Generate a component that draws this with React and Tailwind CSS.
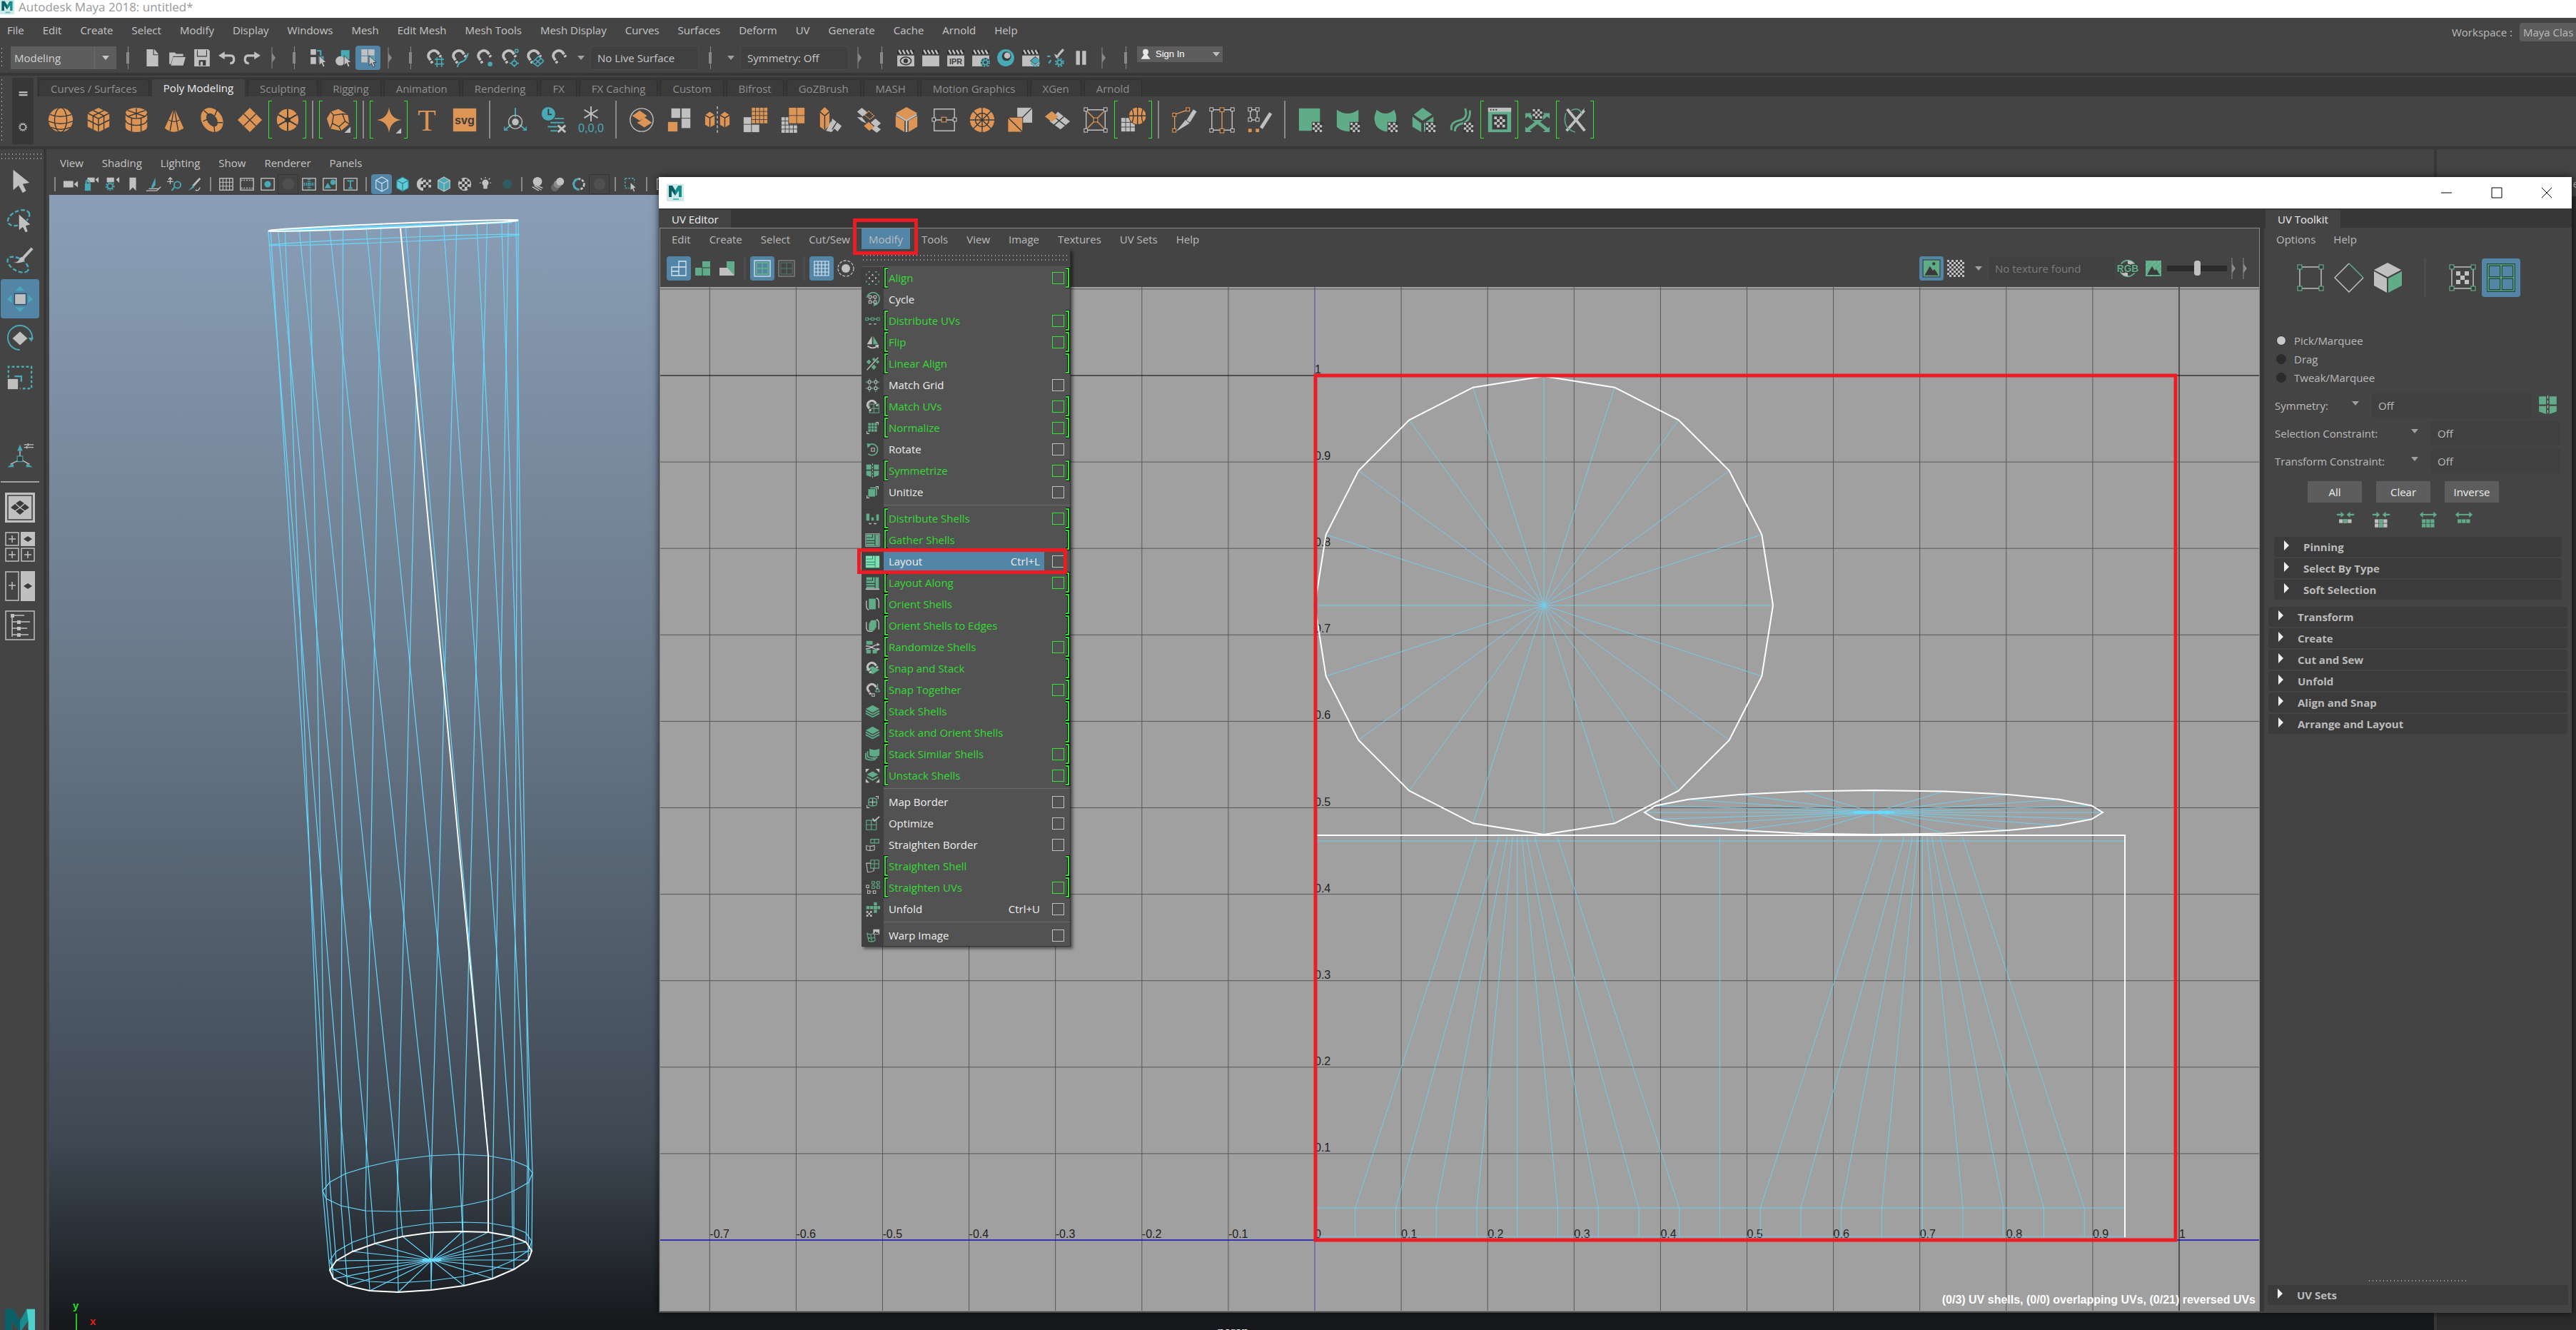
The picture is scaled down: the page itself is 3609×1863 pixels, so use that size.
import { useState } from 'react'
import clsx from 'clsx'

const L = '#c0c0c0'
const T = '#49a9b5'
const O = '#dc9555'
const G = '#60ab88'
const D = '#3a3a3a'
const CYAN = '#66d9ff'

// ---------------------------------------------------------------- icon parts

function Checker({ x, y, s, n = 4, color = L }) {
  const cells = []
  for (let r = 0; r < n; r++) {
    for (let c = 0; c < n; c++) {
      if ((r + c) % 2 === 0) cells.push(<rect key={`${r}-${c}`} x={x + c * s} y={y + r * s} width={s} height={s} fill={color} />)
    }
  }
  return <g>{cells}</g>
}

function Tiles({ x, y, s, cols, rows, gap = 1, color = L }) {
  const cells = []
  for (let r = 0; r < rows; r++) {
    for (let c = 0; c < cols; c++) {
      cells.push(<rect key={`${r}-${c}`} x={x + c * (s + gap)} y={y + r * (s + gap)} width={s} height={s} fill={color} />)
    }
  }
  return <g>{cells}</g>
}

const line = (d, color = L, w = 1.5, extra = {}) => <path d={d} fill="none" stroke={color} strokeWidth={w} {...extra} />
const fill = (d, color = L) => <path d={d} fill={color} />
const box = (x, y, s, color = L) => <rect x={x} y={y} width={s} height={s} fill={D} stroke={color} strokeWidth="1.2" />

const cursor = (x, y) => <path d={`M${x} ${y}l0 13l3 -3l2 5l2.4 -1l-2 -5h4z`} fill={L} stroke={D} strokeWidth="0.8" />
const gear = (x, y, r, color = T) => (
  <g fill="none" stroke={color}>
    <circle cx={x} cy={y} r={r} strokeWidth="2" />
    <circle cx={x} cy={y} r={r + 2} strokeWidth="2" strokeDasharray="2 2" />
  </g>
)
const magnet = (
  <g fill="none">
    <path d="M9 19L4 11A7 7 0 0 1 16 5L20 11" stroke={L} strokeWidth="3.5" />
    <path d="M5 17L10 14M15 10L20 7" stroke={D} strokeWidth="1.2" />
  </g>
)
const clapper = (
  <g>
    {fill('M1 9H23V23H1z')}
    {fill('M1 2H23V7H1z', '#2b2b2b')}
    {line('M3 2l3 5M8 2l3 5M13 2l3 5M18 2l3 5', L, 2.4)}
  </g>
)

function Icon({ size = 24, box: vb = 24, className, children }) {
  return (
    <svg width={size} height={size} viewBox={`0 0 ${vb} ${vb}`} className={clsx('shrink-0', className)} aria-hidden="true">
      {children}
    </svg>
  )
}

function MayaLogo({ size, bare }) {
  return (
    <svg width={size} height={size} viewBox="0 0 24 24" className="shrink-0" aria-hidden="true">
      {!bare && <rect width="24" height="24" fill="#cfe8e8" />}
      <path d="M3 2L8 2L12 9L16 2H21V18H17V9L12 16L7 9V18H3z" fill="#178d8d" />
      <path d="M3 2L8 2L12 9V16L7 9V18H3z" fill="#0c5f66" />
      {bare && <path d="M16 2H21V18L17 14V9z" fill="#4fd0cc" />}
      <path d="M9 21H17" stroke="#5bb" strokeWidth="2" />
    </svg>
  )
}

// ---------------------------------------------------------------- status line icons

const fileIcons = [
  <>{fill('M5 1H15L20 7V23H5z')}{line('M14 1V8H20', D, 1)}</>,
  <>{fill('M2 5H9L11 7H20V10H7L4 20H2z')}{fill('M7 11H23L20 22H4z')}</>,
  <>{fill('M2 1H20L22 3V23H2z')}{line('M6 2V10H18V2', D, 1)}{fill('M8 15H17V22H8z', D)}{fill('M10 17H13V22H10z')}</>,
  <>{fill('M1 9L9 4V14z')}{line('M8 9H17Q21 9 21 14T16 19', L, 3)}</>,
  <>{fill('M23 9L15 4V14z')}{line('M16 9H7Q3 9 3 14T8 19', L, 3)}</>,
]

const maskIcons = [
  <>{fill('M2 1H9V8H2zM2 11H9V20H2z')}{line('M10 3H15V9', T, 2)}{fill('M12 10H19V18H12z', T)}{cursor(13, 9)}</>,
  <>{fill('M9 2H20V14H9z', T)}<circle cx="8" cy="16" r="6" fill={L} />{cursor(13, 9)}</>,
  <><Tiles x={3} y={1} s={8} cols={2} rows={2} />{fill('M12 10H20V18H12z', T)}{cursor(13, 9)}</>,
]

const snapIcons = [
  <>{magnet}{line('M12 14H24M12 20H24M15 11V24M21 11V24', T)}</>,
  <>{magnet}{line('M9 24Q10 18 15 17T23 6', T, 2)}</>,
  <>{magnet}<circle cx="19" cy="20" r="3" fill={T} /></>,
  <>{magnet}<circle cx="21" cy="3" r="2" fill="none" stroke={T} strokeWidth="1.5" /><circle cx="18" cy="19" r="3" fill="none" stroke={T} strokeWidth="1.5" />{line('M18 13V16M18 22V24M12 19H15M21 19H24', T)}</>,
  <>{magnet}{line('M9 18L17 10L24 16L16 23zM13 14L20 20M20 13L12 21', T)}</>,
  <>{magnet}</>,
]

const renderIcons = [
  <>{clapper}<ellipse cx="12" cy="16" rx="7" ry="5" fill="none" stroke={D} strokeWidth="1.5" /><circle cx="12" cy="16" r="3" fill={D} /></>,
  <>{clapper}</>,
  <>{clapper}<text x="12" y="20" textAnchor="middle" fontSize="10" fontWeight="bold" fontFamily="Liberation Sans" fill={D}>IPR</text></>,
  <>{clapper}<circle cx="18" cy="18" r="6" fill={D} />{gear(18, 18, 3)}</>,
  <><circle cx="12" cy="12" r="11" fill={T} /><circle cx="13" cy="10" r="6" fill={D} /><circle cx="14" cy="9" r="4" fill={L} /></>,
  <>{clapper}{fill('M18 10L24 16L18 21L11 16z', D)}{fill('M18 11L24 16L18 20L12 16zM12 18L18 22L24 18V20L18 24L12 20z', T)}</>,
  <>{line('M22 1L15 9', L, 3)}{fill('M10 7L17 10L13 13z')}{line('M1 10H5M3 19L6 15', T, 2)}{gear(17, 18, 3)}</>,
  <>{fill('M6 3H11V21H6zM14 3H19V21H14z')}</>,
]

// ---------------------------------------------------------------- shelf icons, drawn on a 40 unit grid

const squares4 = (...spots) => spots.map(([x, y], i) => <g key={i}>{box(x, y, 5, L)}</g>)
const uvBadge = <><rect x="22" y="23" width="16" height="16" fill={D} /><Checker x={23} y={24} s={3.5} n={4} /></>

const shelf = {
  sphere: <><circle cx="20" cy="20" r="18" fill={O} /><ellipse cx="20" cy="20" rx="9" ry="18" fill="none" stroke={D} strokeWidth="1.5" />{line('M4 12Q20 18 36 12M2 22Q20 29 38 22M6 31Q20 37 34 31', D)}</>,
  cube: <>{fill('M20 2L36 10V30L20 38L4 30V10z', O)}{line('M4 10L20 18L36 10M20 18V38M12 6L28 14V34M28 6L12 14V34M4 20L20 28L36 20', D)}</>,
  cylinder: <>{fill('M4 10A16 8 0 0 1 36 10V30A16 8 0 0 1 4 30z', O)}{line('M4 10A16 8 0 0 0 36 10M4 20A16 8 0 0 0 36 20M13 17V37M27 17V37M20 3V17M7 6L33 15M33 6L7 15', D)}</>,
  cone: <>{fill('M20 2L34 32Q20 43 6 32z', O)}{line('M20 2L14 36M20 2L26 36M12 20Q20 25 28 20', D)}</>,
  torus: <><ellipse cx="20" cy="20" rx="11" ry="15" fill="none" stroke={O} strokeWidth="8" transform="rotate(-35 20 20)" />{line('M8 6L16 13M28 4L24 14M36 24L27 24M24 38L23 28M7 22L15 18', D)}</>,
  plane: <>{fill('M20 2L38 20L20 38L2 20z', O)}{line('M11 11L29 29M29 11L11 29', D)}</>,
  disc: <><circle cx="20" cy="20" r="16" fill={O} />{line('M20 4V36M6 12L34 28M34 12L6 28', D, 2)}<circle cx="20" cy="20" r="4" fill={D} /></>,
  platonic: <>{fill('M20 4L34 12L36 26L24 36L8 33L3 18L9 8z', O)}{line('M13 13L26 11L30 22L21 30L11 25zM13 13L9 8M26 11L34 12M30 22L36 26M21 30L24 36M11 25L8 33', D)}{fill('M38 30V39H29z')}</>,
  super: <>{fill('M20 1Q22 18 38 20Q22 22 20 39Q18 22 2 20Q18 18 20 1z', O)}{fill('M38 32V40H30z')}</>,
  type: <text x="20" y="36" textAnchor="middle" fontSize="44" fontFamily="Liberation Serif" fill={O}>T</text>,
  svg: <><rect x="3" y="3" width="34" height="34" fill={O} /><text x="20" y="26" textAnchor="middle" fontSize="17" fontWeight="bold" fontFamily="Liberation Sans" fill={D}>svg</text></>,
  axis: <>{line('M20 2V16M14 27L4 35M26 27L36 35', T, 2)}<circle cx="20" cy="23" r="10" fill="none" stroke={L} strokeWidth="1.5" /><circle cx="20" cy="23" r="5" fill={L} />{line('M4 30V35H9M36 30V35H31', T)}</>,
  clock: <><circle cx="13" cy="11" r="10" fill={T} />{line('M13 4V12H18', D, 2)}{line('M16 24H36M22 18H36M12 30H26M16 36H26', T, 2)}{line('M27 28L38 38M38 28L27 38', L, 3)}</>,
  freeze: <>{line('M20 0V22M10 5L30 17M30 5L10 17', L, 2)}<text x="20" y="38" textAnchor="middle" fontSize="17" fontFamily="Liberation Sans" fill={T}>0,0,0</text></>,
  combine: <><circle cx="20" cy="20" r="17" fill="none" stroke={L} strokeWidth="1.5" />{fill('M17 6L28 14L17 21L6 14z', O)}{fill('M24 16L35 24L24 31L13 24L17 22z', O)}</>,
  bool: <><rect x="8" y="3" width="13" height="14" fill={L} /><rect x="23" y="3" width="13" height="14" fill={L} /><rect x="23" y="18" width="13" height="14" fill={L} /><rect x="3" y="23" width="14" height="14" fill={O} /></>,
  mirror: <>{fill('M9 8L16 13V27L9 31L2 27V13zM31 8L38 13V27L31 31L24 27V13z', O)}{line('M2 13L9 17L16 13M9 17V31M24 13L31 17L38 13M31 17V31', D)}{line('M20 0V40', L, 1.5, { strokeDasharray: '4 3' })}</>,
  smooth: <><rect x="3" y="16" width="11" height="10" fill={L} /><rect x="3" y="27" width="11" height="11" fill={L} /><rect x="15" y="27" width="11" height="11" fill={L} /><Tiles x={15} y={2} s={5} cols={4} rows={4} color={O} /></>,
  reduce: <><Tiles x={3} y={16} s={5} cols={4} rows={4} /><rect x="13" y="1" width="26" height="26" fill="#444" /><Tiles x={14} y={2} s={11} cols={2} rows={2} color={O} /></>,
  extrude: <>{fill('M11 1L18 8V28L11 35L4 30V8z', O)}{line('M4 8L11 14L18 8M11 14V34', D)}{fill('M20 22L28 30L21 38L13 36z')}{fill('M22 18L36 29L30 37L20 28z')}{line('M29 23L22 34', D)}</>,
  bridge: <>{fill('M10 2L18 9L11 15L3 8zM30 18L38 25L31 31L23 24zM10 22L3 16L10 16L17 25zM30 28L38 34L32 39L24 33z')}{fill('M20 23L28 30L21 36L13 29z', O)}{line('M20 7L28 14L22 19L14 13z', O, 1.5, { strokeDasharray: '2 1' })}</>,
  bevel: <>{fill('M20 1L36 10L20 20L4 10zM4 14L17 21V38L4 30zM36 14L23 21V38L36 30z', O)}{line('M5 12L20 21L35 12M20 21V38', L, 2.5)}</>,
  connect: <>{line('M5 20V4H35V20M35 20V36H5V20M5 20H35', L)}{squares4([2, 17], [33, 17])}{box(16, 16, 7, O)}</>,
  wheel: <><circle cx="20" cy="20" r="18" fill={O} /><circle cx="20" cy="20" r="10" fill="none" stroke={D} strokeWidth="1.5" />{line('M20 2V38M2 20H38M7 7L33 33M33 7L7 33', D)}</>,
  fillHole: <><rect x="16" y="2" width="22" height="22" fill={L} /><rect x="2" y="16" width="22" height="22" fill={O} stroke={D} />{line('M2 16L24 38M24 16L38 2', D)}</>,
  quads: <>{fill('M20 8L38 22L24 34L8 22z')}{line('M29 15L14 28M14 15L31 28', D)}{fill('M11 7L21 15L11 23L1 15z', O)}</>,
  lattice: <>{line('M6 5H34V35H6z', L)}{line('M8 8L32 32M32 8L8 32', O)}{squares4([3, 2], [32, 2], [3, 33], [32, 33])}{box(17, 17, 6, O)}</>,
  convert: <><Tiles x={2} y={17} s={6} cols={3} rows={3} /><circle cx="26" cy="14" r="13" fill={O} stroke={D} />{line('M26 1V27M13 14H39M18 4Q22 14 18 24M34 4Q30 14 34 24', D)}</>,
  knife: <>{line('M26 5L6 12V36', O)}{box(23, 2, 5, O)}{box(3, 10, 5, O)}{box(3, 33, 5, O)}{line('M36 6L26 22', L, 6)}{fill('M22 20L28 25L8 37z')}</>,
  insert: <>{line('M5 5H35V35H5z', L)}{line('M20 5V35', O)}{squares4([2, 2], [33, 2], [2, 33], [33, 33])}{box(17, 2, 6, O)}{box(17, 33, 6, O)}</>,
  quadDraw: <>{line('M6 5H16V20H6z')}{squares4([3, 2], [14, 2], [3, 17], [14, 17])}<rect x="3" y="33" width="5" height="5" fill={O} /><rect x="14" y="33" width="5" height="5" fill={O} />{line('M36 10L22 32', L, 5)}</>,
  uvPlane: <><rect x="3" y="3" width="31" height="33" fill={G} />{uvBadge}</>,
  uvCyl: <>{fill('M3 5Q19 16 35 5V31Q30 37 22 37Q8 37 3 30z', G)}{uvBadge}</>,
  uvSph: <>{fill('M6 5Q19 16 32 5Q38 18 32 30Q26 38 19 37Q1 33 3 14z', G)}{uvBadge}</>,
  uvCube: <>{fill('M18 2L32 12L18 21L5 12zM3 15L16 25V38L3 30zM20 25L34 15V30L20 38z', G)}{uvBadge}</>,
  uvPath: <>{line('M5 35Q2 24 16 21T25 3', G, 3)}{line('M10 37Q9 28 21 25T32 6', G, 3)}{uvBadge}</>,
  uvEditor: <><rect x="3" y="2" width="34" height="36" fill={G} /><rect x="3" y="2" width="34" height="6" fill={L} /><rect x="9" y="12" width="22" height="22" fill={D} /><Checker x={12} y={15} s={4} n={4} />{line('M6 5H8M10 5H12M14 5H16', D, 2)}</>,
  uvUnfold: <>{line('M6 12L34 34M34 12L6 34', G, 5)}{fill('M2 10H12L2 18zM38 10H28L38 18zM2 38H12L2 30zM38 38H28L38 30z', G)}<rect x="12" y="3" width="16" height="17" fill={D} /><Checker x={13} y={4} s={3.5} n={4} /></>,
  sew: <>{line('M8 4L34 36M35 4L7 36', L, 4)}{line('M14 6Q26 0 30 12M6 10Q0 32 20 38', G)}<circle cx="35" cy="5" r="2" fill={D} /></>,
}

const shelfRow = [
  'sphere', 'cube', 'cylinder', 'cone', 'torus', 'plane', '[disc', '|', '[platonic', '|', '[super', 'type', 'svg', '|',
  'axis', 'clock', 'freeze', '|', 'combine', 'bool', 'mirror', 'smooth', 'reduce', 'extrude', 'bridge', 'bevel', 'connect',
  'wheel', 'fillHole', 'quads', 'lattice', '[convert', '|', 'knife', 'insert', 'quadDraw', '|',
  'uvPlane', 'uvCyl', 'uvSph', 'uvCube', 'uvPath', '[uvEditor', 'uvUnfold', '[sew',
]

// ---------------------------------------------------------------- panel toolbar icons

const framed = (children, color = L) => <><rect x="2" y="3" width="20" height="18" fill="none" stroke={color} strokeWidth="1.5" />{children}</>
const wireCube = (stroke, face) => <><path d="M12 1L21 6V18L12 23L3 18V6z" fill={face} stroke={stroke} strokeWidth="1.3" /><path d="M3 6L12 11L21 6M12 11V23" fill="none" stroke={stroke} strokeWidth="1.3" /></>

const panelIcons = [
  '|',
  <>{fill('M1 7H16V17H1zM17 12L23 7V17z')}</>,
  <>{fill('M6 2H17V9H6zM18 5L23 1V10z')}{fill('M2 11H11V22H2z', T)}{line('M4 11V7Q6 4 9 7V11', T, 2)}</>,
  <>{fill('M4 2H15V9H4zM18 5L23 1V10z')}{gear(9, 15, 4)}</>,
  <>{fill('M7 2H17V22L12 17L7 22z')}</>,
  <>{line('M1 22H17L23 16M5 19H20', L)}{fill('M9 15L15 2V13L9 21z', T)}</>,
  <>{line('M1 8H11M6 2V12M3 5L6 2L9 5', L)}<circle cx="17" cy="13" r="5" fill="none" stroke={T} strokeWidth="2" />{line('M13 16L8 22', T, 2)}</>,
  <>{line('M20 3L9 15', L, 3)}{fill('M2 22L10 13L11 17z', T)}{line('M13 21Q18 23 20 17', L)}</>,
  '|',
  framed(line('M7 3V21M12 3V21M17 3V21M2 9H22M2 15H22', L, 1.2)),
  framed(line('M3 6H21M3 18H21', L, 1.5, { strokeDasharray: '2 2' })),
  framed(<circle cx="12" cy="12" r="5" fill={T} />),
  'dim',
  framed(line('M12 4V20M4 12H20', T, 5, { strokeDasharray: '1.5 1.5' })),
  framed(<>{fill('M4 18L9 10L14 18z', T)}<circle cx="17" cy="9" r="4" fill={T} /></>),
  framed(line('M7 7H17M12 7V18M9 18H15', T, 2)),
  '|',
  { active: true, art: wireCube('#cfe4f0', 'none') },
  <>{wireCube('#2b7f8a', '#5ecbd6')}</>,
  <><circle cx="12" cy="12" r="10" fill={L} /><path d="M12 2A10 10 0 0 1 12 22V17H8V12H12V7H8z" fill={D} /><Checker x={12} y={5} s={4} n={3} /></>,
  <>{wireCube(L, T)}</>,
  <><circle cx="12" cy="12" r="10" fill={L} /><Checker x={4} y={4} s={4} n={4} color={D} /></>,
  <><circle cx="12" cy="10" r="5" fill={L} />{fill('M9 14H15V19H9z')}{line('M12 1V3M3 10H5M19 10H21M5 3L7 5M19 3L17 5', L)}</>,
  <><circle cx="14" cy="12" r="7" fill="#2f5c60" /></>,
  '|',
  <><circle cx="12" cy="8" r="7" fill={L} />{line('M4 16L14 22M7 14L18 21M11 14L20 18', L)}</>,
  <><circle cx="7" cy="17" r="6" fill="#666" /><circle cx="11" cy="12" r="6" fill="#888" /><circle cx="15" cy="8" r="6" fill={L} /></>,
  <><circle cx="12" cy="12" r="8" fill="none" stroke={L} strokeWidth="3" strokeDasharray="4 2" /><path d="M12 4A8 8 0 0 0 12 20" fill="none" stroke={T} strokeWidth="3" /></>,
  'dim',
  '|',
  <>{line('M3 3H17V10M3 3V18H10', T, 1.5, { strokeDasharray: '3 2' })}{cursor(11, 9)}</>,
  '|',
  <>{line('M4 4H20V20H4z', L)}</>,
]

// ---------------------------------------------------------------- tool box

const tools = [
  { name: 'Select', art: fill('M10 3L34 22L24 24L29 34L24 37L18 26L10 33z') },
  { name: 'Lasso', art: <><ellipse cx="18" cy="16" rx="17" ry="10" transform="rotate(-25 18 16)" fill="none" stroke={T} strokeWidth="2.5" strokeDasharray="6 3" /><path d="M18 10L36 26L29 28L32 36L28 38L24 30L18 35z" fill={L} stroke={D} /></> },
  { name: 'Paint Select', art: <><ellipse cx="17" cy="27" rx="17" ry="9" transform="rotate(30 17 27)" fill="none" stroke={T} strokeWidth="2.5" strokeDasharray="6 3" />{line('M38 3L25 17', L, 4)}{fill('M10 24Q18 24 20 17Q25 14 27 19Q26 26 10 24z')}</> },
  { name: 'Move', active: true, art: <><rect x="12" y="12" width="17" height="16" fill={L} stroke="#2f4f63" strokeWidth="1.5" />{fill('M20 1L27 8H13zM20 39L27 32H13zM1 20L8 14V26zM39 20L32 14V26z', T)}</> },
  { name: 'Rotate', art: <>{fill('M20 10L31 20L20 30L9 20z')}{line('M20 37A18 18 0 1 1 38 20', T, 2)}{fill('M32 19H40L37 25z', T)}</> },
  { name: 'Scale', art: <>{line('M3 20V4H37V36H20', T, 2.5, { strokeDasharray: '4 3' })}{line('M12 18H22V26', T, 2.5)}<rect x="2" y="22" width="15" height="15" fill={L} /></> },
  null,
  { name: 'Last Tool', art: <>{line('M20 12V22M18 26L6 32M23 26L34 32', L)}{box(16, 20, 8, T)}{fill('M20 3L24 12H16zM1 36L10 31L11 36zM39 36L30 31L29 36z', T)}{line('M26 3H40M26 7H40M32 1V5M30 5V9', L)}</> },
]

const layouts = [
  { name: 'Single', art: <><rect x="0" y="0" width="42" height="42" fill={L} /><rect x="4" y="4" width="34" height="34" fill="none" stroke={D} strokeWidth="1.5" />{fill('M21 11L27 15L21 20L15 15zM21 22L27 26L21 31L15 26zM14 16L20 21L14 25L8 21zM28 16L34 21L28 25L22 21z', D)}</> },
  { name: 'Four View', art: <>{line('M1 1H19V19H1zM1 23H19V41H1zM23 23H41V41H23zM10 5V15M5 10H15M10 27V37M5 32H15M32 27V37M27 32H37', L)}<rect x="22" y="0" width="20" height="20" fill={L} />{fill('M32 6L38 10L32 14L26 10z', D)}</> },
  { name: 'Two Stacked', art: <>{line('M1 1H19V41H1zM10 15V26M5 20H15', L)}<rect x="22" y="0" width="20" height="42" fill={L} />{fill('M32 17L38 21L32 25L26 21z', D)}</> },
  { name: 'Outliner', art: <>{line('M1 1H41V41H1zM10 8V37M10 7H27M10 16H35M10 25H31M10 34H33', L)}<rect x="8" y="5" width="5" height="5" fill={L} /><rect x="17" y="14" width="5" height="5" fill={L} /><rect x="17" y="23" width="5" height="5" fill={L} /><rect x="17" y="32" width="5" height="5" fill={L} /></> },
]

// ---------------------------------------------------------------- Modify menu

const corners = line('M17 3H21V7M7 21H3V17', L, 1.3)
const stack = <>{fill('M12 2L23 8L12 14L1 8z', G)}{line('M1 11L12 17L23 11M1 15L12 21L23 15', G, 2)}</>
const shellsArt = <><rect x="2" y="3" width="20" height="18" fill={G} />{line('M2 8H12V3M2 13H16V3M16 13V21M2 17H16', D, 1.2)}</>

// name, bracketed as new, has an option box, art, shortcut
const menuGroups = [
  [
    ['Align', 1, 1, <>{line('M5 2H8M16 2H19M5 22H8M16 22H19M2 5V8M2 16V19M22 5V8M22 16V19', G)}{fill('M12 5L14 8H10zM12 19L14 16H10zM5 12L8 10V14zM19 12L16 10V14z')}</>],
    ['Cycle', 0, 0, <>{line('M3 9A10 10 0 1 1 17 20', G, 2)}{fill('M20 20L13 23L15 16z', G)}{line('M8 8V16H16V8z', L, 1)}{box(6, 6, 4)}{box(14, 6, 4)}{box(6, 14, 4)}{box(14, 14, 4)}</>],
    ['Distribute UVs', 1, 1, <>{line('M5 9H19', G)}{box(1, 7, 4, G)}{box(10, 7, 4, G)}{box(19, 7, 4, G)}{line('M6 17H10M14 17H18', L)}</>],
    ['Flip', 1, 1, <>{fill('M11 2V15H3z')}{fill('M13 2V15H21z', G)}{line('M4 18Q12 24 20 18', L, 2)}{fill('M16 16L22 16L21 22z')}</>],
    ['Linear Align', 1, 0, <>{line('M3 22L21 2', L, 1.5)}{fill('M6 5L10 9L6 13L2 9zM14 2L17 5L14 8L11 5zM14 13L18 17L14 22L10 17zM20 6L23 9L20 12L17 9z', G)}</>],
    ['Match Grid', 0, 1, <>{line('M7 1V23M17 1V23M1 7H23M1 17H23', G, 1.2)}{box(5, 5, 4)}{box(15, 5, 4)}{box(5, 15, 4)}{box(15, 15, 4)}</>],
    ['Match UVs', 1, 1, <>{line('M7 8H22V22H7zM14 8V22M7 15H22', G, 1.2)}{magnet}</>],
    ['Normalize', 1, 1, <>{corners}<Tiles x={5} y={4} s={4} cols={3} rows={3} color={G} /></>],
    ['Rotate', 0, 1, <>{line('M6 5A9 9 0 1 1 5 19', G, 2)}{fill('M3 2L10 4L4 10z', G)}{box(10, 10, 5)}</>],
    ['Symmetrize', 1, 1, <>{fill('M2 2H10V10H2zM14 2H22V10H14zM2 12H10V22L2 19zM14 12H22V19L14 22z', G)}{line('M12 0V24', L, 1, { strokeDasharray: '3 2' })}</>],
    ['Unitize', 0, 1, <>{corners}{fill('M5 7H16V19H5z', G)}{line('M8 5H18V17', G, 2)}</>],
  ],
  [
    ['Distribute Shells', 1, 1, <>{fill('M2 4H7V15H2zM10 10H14V15H10zM18 5H22V15H18z', G)}{line('M6 20H10M14 20H18', L)}</>],
    ['Gather Shells', 1, 0, <>{shellsArt}<rect x="1" y="2" width="22" height="20" fill="none" stroke={L} /></>],
    ['Layout', 0, 1, <><rect x="1" y="3" width="22" height="19" fill="#7fe0b4" />{line('M2 8H12V3M2 13H16V3M16 13V21M2 17H16', '#3c8f6c', 1.2)}</>, 'Ctrl+L'],
    ['Layout Along', 1, 1, <>{shellsArt}{line('M1 22H23', L, 2)}</>],
    ['Orient Shells', 1, 0, <>{fill('M6 3H17V20H6z', G)}{line('M2 6V14Q2 20 6 21M22 18V9Q22 3 18 2', L)}</>],
    ['Orient Shells to Edges', 1, 0, <>{fill('M10 3H18V14L14 20H6V9z', G)}{line('M2 6V14Q2 20 6 21H12M22 18V9Q22 3 18 2', L)}</>],
    ['Randomize Shells', 1, 1, <>{fill('M2 2H12V8H2zM2 16H9V22H2zM12 16H19V22H12z', G)}{line('M1 10Q8 10 12 13T22 15M1 15Q8 14 12 11T22 8', L)}{fill('M19 5L24 8L19 10zM19 13L24 15L19 18z')}</>],
    ['Snap and Stack', 1, 0, <>{fill('M12 8L23 14L12 21L1 14z', G)}{magnet}</>],
    ['Snap Together', 1, 1, <>{magnet}{line('M20 2V9M16 14H24M12 22H14', G)}{box(18, 11, 4, G)}{box(11, 18, 4)}</>],
    ['Stack Shells', 1, 0, stack],
    ['Stack and Orient Shells', 1, 0, stack],
    ['Stack Similar Shells', 1, 1, <>{fill('M7 3Q15 7 23 3V14Q15 18 7 14z', G)}{line('M4 7V16Q12 20 20 17M1 10V19Q9 23 17 20', G, 2)}</>],
    ['Unstack Shells', 1, 1, <>{fill('M1 1H7L1 7zM23 1H17L23 7zM1 23H7L1 17zM23 23H17L23 17z')}{fill('M12 5L21 10L12 15L3 10z', G)}{line('M3 14L12 19L21 14', G, 2)}</>],
  ],
  [
    ['Map Border', 0, 1, <>{corners}{line('M6 7Q12 4 18 7Q20 12 18 17Q12 19 6 17Q5 12 6 7M12 5V19M5 12H19', G, 1.5)}{line('M12 8V16M8 12H16', L, 1)}</>],
    ['Optimize', 0, 1, <>{line('M2 7H18V22H2zM10 7V22M2 14H18', G, 1.3)}{line('M12 4L15 8L23 1', L, 2)}</>],
    ['Straighten Border', 0, 1, <>{line('M9 3H22V9H9zM15 3V9', G, 1.3)}{line('M2 13Q8 15 15 13V20Q8 22 2 20zM8 14V21', L, 1.2)}</>],
    ['Straighten Shell', 1, 0, <>{line('M9 2H22V15H9zM15 2V15M9 8H22', G, 1.3)}{line('M9 7H2L4 21Q9 22 14 19V15', L, 1.2)}</>],
    ['Straighten UVs', 1, 1, <>{line('M13 4H20V11H13zM4 10V18H13', G, 1, { strokeDasharray: '3 1' })}{box(11, 2, 4, G)}{box(19, 2, 4, G)}{box(11, 9, 4, G)}{box(19, 9, 4, G)}{box(2, 8, 4)}{box(4, 17, 4)}{box(13, 17, 4)}</>],
    ['Unfold', 0, 1, <><Tiles x={2} y={7} s={5} cols={4} rows={1} color={G} /><Tiles x={14} y={1} s={5} cols={1} rows={3} color={G} /><Checker x={2} y={15} s={3} n={3} /></>, 'Ctrl+U'],
  ],
  [
    ['Warp Image', 0, 1, <>{line('M3 8Q8 12 15 8M3 8L6 21Q12 23 16 20L15 8M9 10L11 22M4 15Q10 18 16 14', G, 1.3)}<rect x="13" y="2" width="10" height="8" fill={L} />{fill('M14 9L17 5L19 8L20 6L22 9z', D)}</>],
  ],
]

// ---------------------------------------------------------------- small widgets

const Handle = ({ className }) => (
  <span className={clsx('flex shrink-0 justify-center', className)}>
    <span className="flex h-8 w-1 flex-col items-center">
      <span className="h-2 w-px bg-[#888]" />
      <span className="w-1 flex-1 bg-[#888]" />
      <span className="h-2 w-px bg-[#888]" />
    </span>
  </span>
)

const Expander = ({ className }) => (
  <svg width="6" height="30" viewBox="0 0 6 30" className={clsx('shrink-0', className)} aria-hidden="true">
    <path d="M1 0V30" stroke="#888" />
    <path d="M1 8L6 15L1 22z" fill="#888" />
  </svg>
)

const Down = ({ className, color = '#a0a0a0' }) => (
  <svg width="10" height="6" viewBox="0 0 10 6" className={clsx('shrink-0', className)} aria-hidden="true">
    <path d="M0 0H10L5 6z" fill={color} />
  </svg>
)

const Dots = ({ className }) => (
  <div className={clsx('bg-[radial-gradient(#a0a0a0_1px,transparent_1px)] bg-[length:5px_6px]', className)} />
)

const Bracket = ({ right }) => (
  <svg width="7" height="30" viewBox="0 0 7 30" className={clsx('shrink-0', right && 'rotate-180')} aria-hidden="true">
    <path d="M6 2H2V28H6" fill="none" stroke="#101010" strokeWidth="4" />
    <path d="M6 2H2V28H6" fill="none" stroke="#2fe62f" strokeWidth="2" />
  </svg>
)

function MenuBar({ items, className }) {
  return (
    <nav className={clsx('flex items-center', className)}>
      {items.map(item => <button key={item} className="whitespace-nowrap">{item}</button>)}
    </nav>
  )
}

function IconCell({ children, label, active, className }) {
  return (
    <button aria-label={label} className={clsx('flex shrink-0 items-center justify-center', active && 'rounded-sm bg-[#5285a6]', className)}>
      {children}
    </button>
  )
}

function IconGroup({ icons, label, active = -1 }) {
  return icons.map((art, i) => (
    <IconCell key={i} label={`${label} ${i + 1}`} active={i === active} className="h-[34px] w-[35px]">
      <Icon size={26}>{art}</Icon>
    </IconCell>
  ))
}

// ---------------------------------------------------------------- main window rows

const mainMenu = ['File', 'Edit', 'Create', 'Select', 'Modify', 'Display', 'Windows', 'Mesh', 'Edit Mesh', 'Mesh Tools', 'Mesh Display', 'Curves', 'Surfaces', 'Deform', 'UV', 'Generate', 'Cache', 'Arnold', 'Help']
const shelfTabs = ['Curves / Surfaces', 'Poly Modeling', 'Sculpting', 'Rigging', 'Animation', 'Rendering', 'FX', 'FX Caching', 'Custom', 'Bifrost', 'GoZBrush', 'MASH', 'Motion Graphics', 'XGen', 'Arnold']

function StatusLine() {
  return (
    <div className="flex h-[42px] items-center">
      <Dots className="h-8 w-[6px]" />
      <div className="relative ml-[9px] h-8 w-[148px] shrink-0">
        <select aria-label="Menu set" className="size-full appearance-none bg-[#5d5d5d] pl-[5px] text-[#d0d0d0]">
          <option>Modeling</option>
        </select>
        <span className="pointer-events-none absolute inset-y-0 right-0 flex w-[31px] items-center justify-center border-l border-[#6b6b6b]"><Down color="#c8c8c8" /></span>
      </div>
      <Handle className="w-8" />
      <IconGroup icons={fileIcons} label="File" />
      <Expander className="mx-[10px]" />
      <Handle className="w-8" />
      <IconGroup icons={maskIcons} label="Mask" active={2} />
      <Expander className="mx-[10px]" />
      <Handle className="w-8" />
      <IconGroup icons={snapIcons} label="Snap" />
      <Down className="mx-2" />
      <input aria-label="Live surface" defaultValue="No Live Surface" className="h-[34px] w-[152px] rounded-sm border border-[#4b4b4b] bg-[#404040] px-[9px] text-[#c8c8c8]" />
      <Handle className="w-8" />
      <Down className="mx-2" />
      <input aria-label="Symmetry" defaultValue="Symmetry: Off" className="h-[34px] w-[152px] rounded-sm border border-[#4b4b4b] bg-[#404040] px-[9px] text-[#c8c8c8]" />
      <Expander className="mx-3" />
      <Handle className="w-8" />
      <IconGroup icons={renderIcons} label="Render" />
      <Expander className="mx-3" />
      <Handle className="w-8" />
      <button className="mb-[11px] flex h-[22px] w-[120px] items-center gap-[6px] bg-[#5d5d5d] px-1 font-['Liberation_Sans',Arial,sans-serif] text-[13px] text-white">
        <Icon size={16}><circle cx="12" cy="7" r="6" fill="#e8e8e8" />{fill('M9 12H15L22 22H2z', '#e8e8e8')}</Icon>
        Sign In
        <Down className="ml-auto" color="#c0c0c0" />
      </button>
    </div>
  )
}

function Shelf() {
  return (
    <div className="flex border-b-4 border-[#373737] bg-[#444]">
      <Dots className="mt-px h-[92px] w-[6px]" />
      <div className="mt-px mr-[5px] ml-[11px] flex h-[93px] w-[30px] flex-col items-center justify-around bg-[#373737]">
        <Icon size={13}>{line('M1 8H23M1 15H23', L, 4)}</Icon>
        <Icon size={16}>{gear(12, 12, 6, L)}</Icon>
      </div>
      <div className="flex-1">
        <div className="flex h-[27px] items-end gap-[4px] bg-[#373737] pl-[2px]">
          {shelfTabs.map(tab => (
            <button key={tab} className={clsx('h-6 rounded-t-sm px-4 whitespace-nowrap', tab === 'Poly Modeling' ? 'bg-[#444] text-[#eee]' : 'border border-b-0 border-[#2f2f2f] bg-[#3b3b3b] text-[#909090]')}>
              {tab}
            </button>
          ))}
        </div>
        <div className="flex h-[70px] items-start pt-[6px] pl-[6px]">
          {shelfRow.map((entry, i) => {
            if (entry === '|') return <span key={i} className="mx-2 h-[53px] w-[2px] shrink-0 bg-[#8a8a8a]" />
            const marked = entry[0] === '['
            const name = marked ? entry.slice(1) : entry
            return (
              <button key={i} aria-label={name} className="flex h-[53px] w-[53px] shrink-0 items-center justify-between">
                {marked ? <span className="h-[53px] w-[5px] border border-r-0 border-[#2fe62f]" /> : <span />}
                <Icon size={38} box={40}>{shelf[name]}</Icon>
                {marked ? <span className="h-[53px] w-[5px] border border-l-0 border-[#2fe62f]" /> : <span />}
              </button>
            )
          })}
        </div>
      </div>
    </div>
  )
}

function ToolBox() {
  return (
    <div className="flex w-[65px] shrink-0 flex-col border-r-4 border-[#373737]">
      <Dots className="mt-[4px] mb-px h-3 w-[60px]" />
      {tools.map((tool, i) => tool === null
        ? <span key={i} className="h-[55px]" />
        : (
          <button key={tool.name} aria-label={tool.name} className={clsx('ml-px flex h-[55px] w-[54px] items-center justify-center', tool.active && 'rounded-sm bg-[#5285a6]')}>
            <Icon size={38} box={40}>{tool.art}</Icon>
          </button>
        ))}
      <span className="mt-2 ml-px h-[2px] w-[54px] bg-[#a0a0a0]" />
      <div className="mt-[14px] ml-[7px] flex flex-col gap-[13px]">
        {layouts.map(item => (
          <button key={item.name} aria-label={item.name}><Icon size={42} box={42}>{item.art}</Icon></button>
        ))}
      </div>
      <span className="mt-auto h-[34px] overflow-hidden"><MayaLogo size={56} bare /></span>
    </div>
  )
}

// ---------------------------------------------------------------- perspective view

const capLoop = [[648, 1725], [684, 1726], [718, 1732], [737, 1740], [745, 1752], [740, 1765], [720, 1778], [690, 1791], [650, 1801], [604, 1807], [558, 1810], [518, 1808], [487, 1801], [467, 1791], [462, 1779], [471, 1766], [494, 1753], [525, 1742], [564, 1732], [607, 1726]]
const midLoop = [[643, 1617], [684, 1619], [717, 1625], [739, 1634], [746, 1643], [741, 1656], [720, 1668], [690, 1680], [648, 1689], [603, 1695], [556, 1697], [512, 1696], [478, 1689], [457, 1679], [452, 1668], [462, 1656], [484, 1644], [516, 1634], [555, 1625], [602, 1619]]
const topLoop = capLoop.map((_, k) => {
  const a = (275.6 + 18 * (k - 1)) * Math.PI / 180
  const x = 551 + 176 * Math.cos(a)
  return [x, 316 - (x - 551) * 0.042 - 3 * Math.sin(a)]
})
const pts = list => list.map(p => p.join(',')).join(' ')

function Cylinder() {
  return (
    <svg className="block size-full" aria-hidden="true">
      <g transform="translate(-69 -273)" fill="none" stroke={CYAN} strokeWidth="1.2">
        {capLoop.map((p, k) => <polyline key={k} points={pts([topLoop[k], midLoop[k], p, [605, 1765]])} />)}
        <polygon points={pts(midLoop)} />
        <polygon points={pts(capLoop.map(([x, y]) => [x, y - 13]))} />
        <polygon points={pts(topLoop.map(([x, y]) => [x + 2, y + 20]))} />
        <path d="M385 323L718 311" strokeWidth="3" />
        <path d="M592 1765H618" strokeWidth="4" />
        <g stroke="#fff" strokeWidth="2">
          <polygon points={pts(topLoop)} />
          <polygon points={pts(capLoop)} />
          <polyline points={pts([[561, 320], midLoop[1], capLoop[1]])} />
        </g>
        <path d="M107 1840V1863" stroke="#25c425" strokeWidth="2" />
      </g>
      <text x="33" y="1561" fontSize="15" fontWeight="bold" fontFamily="Liberation Sans" fill="#25e025">y</text>
      <text x="57" y="1583" fontSize="15" fontWeight="bold" fontFamily="Liberation Sans" fill="#e02020">x</text>
    </svg>
  )
}

function Viewport() {
  return (
    <div className="flex min-w-0 flex-1 flex-col pl-1">
      <MenuBar items={['View', 'Shading', 'Lighting', 'Show', 'Renderer', 'Panels']} className="h-[34px] gap-[26px] pt-[4px] pl-[15px] text-[#c4c4c4]" />
      <div className="flex h-[30px] items-center">
        {panelIcons.map((art, i) => {
          if (art === '|') return <span key={i} className="flex w-[15px] shrink-0 justify-center"><span className="h-5 w-[2px] bg-[#888]" /></span>
          if (art === 'dim') return <span key={i} className="flex h-[28px] w-[29px] items-center justify-center border border-[#363636]"><span className="size-4 rounded-full bg-[#505050]" /></span>
          return (
            <IconCell key={i} label={`View option ${i}`} active={art.active} className="h-[28px] w-[29px]">
              <Icon size={22}>{art.active ? art.art : art}</Icon>
            </IconCell>
          )
        })}
      </div>
      <div className="relative min-h-0 flex-1 overflow-hidden bg-[linear-gradient(#8a9fb7,#6b7a8b_41%,#3f4954_83%,#15171a)]">
        <Cylinder />
        <span className="absolute -bottom-[13px] left-1/2 -translate-x-[34px] font-['Liberation_Sans',Arial,sans-serif] text-[16px] font-bold text-white">persp</span>
      </div>
    </div>
  )
}

// ---------------------------------------------------------------- UV canvas

const TENTH = 121.1
const polygon20 = (cx, cy, rx, ry) => Array.from({ length: 20 }, (_, k) => {
  const a = k * Math.PI / 10
  return [cx + rx * Math.cos(a), cy + ry * Math.sin(a)]
})

function Disc({ cx, cy, rx, ry }) {
  const ring = polygon20(cx, cy, rx, ry)
  return (
    <g fill="none">
      {ring.map(([x, y], k) => <path key={k} d={`M${cx} ${cy}L${x} ${y}`} stroke={CYAN} opacity="0.8" />)}
      <polygon points={pts(ring)} stroke="#fff" strokeWidth="2" />
    </g>
  )
}

const fan = [-59, -27, -15, -7, 0, 7, 14, 26, 58]
const STEP = 1135 / 20
const TOP = -568

function Strip() {
  const rows = []
  for (let i = 1; i < 20; i++) {
    const x = i * STEP
    const mid = i < 10 ? 5 * STEP : 15 * STEP
    const upper = i === 10 ? x : mid + fan[(i - 1) % 10]
    const cap = i === 10 ? x : upper - (upper - mid) * 0.05
    rows.push(<polyline key={i} points={`${cap},${TOP} ${upper},-559 ${x},-45 ${x},-4`} />)
  }
  return (
    <g fill="none" stroke={CYAN} opacity="0.8">
      {rows}
      <path d="M0 -559H1135M0 -45H1135M0 -5H1135" />
    </g>
  )
}

function UVCanvas() {
  const ticks = []
  for (let i = -7; i <= 10; i++) ticks.push(i)
  const label = i => i % 10 === 0 ? i / 10 : (i / 10).toFixed(1)
  return (
    <div className="relative min-h-0 flex-1 overflow-hidden bg-[#a0a0a0]">
      <svg className="absolute inset-0 size-full" role="img" aria-label="UV layout">
        <g transform="translate(917 1335)">
          {ticks.map(i => (
            <path key={i} d={`M${i * TENTH} -1400V140`} stroke={i === 10 ? '#000' : i === 0 ? '#4545a8' : '#585858'} />
          ))}
          {[1, 2, 3, 4, 5, 6, 7, 8, 9, 10, 11].map(i => (
            <path key={i} d={`M-920 ${-i * TENTH}H1400`} stroke={i === 10 ? '#000' : '#585858'} />
          ))}
          <path d="M-920 0H1400" stroke="#1010b8" strokeWidth="1.5" />
          <g fontFamily="Liberation Sans" fontSize="16" fill="#222">
            {ticks.map(i => <text key={i} x={i * TENTH} y="-3">{label(i)}</text>)}
            {ticks.filter(i => i > 0).map(i => <text key={i} x="0" y={-i * TENTH - 3}>{label(i)}</text>)}
          </g>
          <Strip />
          <Disc cx={321} cy={-889} rx={321} ry={321} />
          <Disc cx={783} cy={-599} rx={321} ry={31} />
          <path d="M755 -599H811" stroke={CYAN} strokeWidth="4" />
          <path d={`M0 ${TOP + 1}H1135V-4`} fill="none" stroke="#fff" strokeWidth="2" />
          <rect x="1" y="-1211" width="1205" height="1211" fill="none" stroke="#ec1c24" strokeWidth="5" />
        </g>
      </svg>
      <p className="absolute right-[5px] bottom-[5px] font-['Liberation_Sans',Arial,sans-serif] text-[16px] font-bold text-white">
        (0/3) UV shells, (0/0) overlapping UVs, (0/21) reversed UVs
      </p>
    </div>
  )
}

// ---------------------------------------------------------------- UV editor

function MenuItem({ name, fresh, option, art, shortcut }) {
  const current = name === 'Layout'
  return (
    <div className={clsx('relative flex h-[30px] items-center', current && 'z-10')}>
      <span className="flex h-full w-[31px] shrink-0 items-center justify-center bg-[#404040]"><Icon size={21}>{art}</Icon></span>
      <button className={clsx('flex h-[28px] flex-1 items-center pr-[6px] text-left whitespace-nowrap', fresh ? 'text-[#33dd33]' : 'text-[#eee]', current && 'bg-[#5285a6]')}>
        {fresh ? <Bracket /> : <span className="w-[7px]" />}
        <span className="flex-1">{name}</span>
        {shortcut && <span>{shortcut}</span>}
      </button>
      <span className="flex w-[36px] shrink-0 items-center justify-end gap-px">
        {option ? <button aria-label={`${name} options`} className={clsx('size-[17px] border', fresh ? 'border-[#2fe62f]' : 'border-[#c0c0c0]')} /> : null}
        {fresh ? <Bracket right /> : <span className="w-[7px]" />}
      </span>
      {current && <span className="pointer-events-none absolute -top-[3px] right-1 -bottom-[3px] -left-[6px] border-5 border-[#ec1c24]" />}
    </div>
  )
}

function ModifyMenu() {
  return (
    <div className="absolute top-full left-0 z-20 w-[293px] border-r border-b border-[#333] bg-[#525252] text-[15px] shadow-[3px_3px_4px_rgba(0,0,0,0.5)]">
      <div className="h-[25px] border-b border-[#5a5a5a] bg-[#444] pt-[6px]"><Dots className="h-3" /></div>
      {menuGroups.map((group, g) => (
        <div key={g}>
          {g > 0 && (
            <div className="flex h-[7px] items-center">
              <span className="h-full w-[31px] bg-[#404040]" />
              <span className="h-px flex-1 bg-[#6a6a6a]" />
            </div>
          )}
          {group.map(([name, fresh, option, art, shortcut]) => (
            <MenuItem key={name} name={name} fresh={fresh} option={option} art={art} shortcut={shortcut} />
          ))}
        </div>
      ))}
    </div>
  )
}

const uvLeft = [
  { art: line('M2 10H12V22H2zM12 10V2H22V22H12M12 10H22M2 16H12', '#d8e6f0', 1.3), active: true },
  { art: <>{fill('M11 2H22V11H11z', G)}{fill('M1 11H22V22H1z', G)}{line('M11 11V22M11 11H22', D, 1)}</> },
  { art: <>{fill('M11 2H22V22H11z', G)}{fill('M1 11H12L22 22H1z')}</> },
  null,
  { art: <><rect x="1" y="1" width="22" height="22" fill="none" stroke="#d8e6f0" strokeWidth="1.3" />{line('M4 4H20V20H4zM12 4V20M4 12H20', G, 1.8)}</>, active: true },
  { art: <><rect x="1" y="1" width="22" height="22" fill="none" stroke="#999" />{line('M4 4H20V20H4zM12 4V20M4 12H20', '#4d7a66', 1)}</> },
  null,
  { art: line('M2 2H22V22H2zM7 2V22M12 2V22M17 2V22M2 7H22M2 12H22M2 17H22', '#d8e6f0', 1.2), active: true },
  { art: <><circle cx="12" cy="12" r="6" fill={L} /><circle cx="12" cy="12" r="11" fill="none" stroke={L} strokeWidth="1.3" strokeDasharray="4 2" /></> },
  null,
]

function UVEditor() {
  const [open, setOpen] = useState(true)
  return (
    <section className="flex min-w-0 flex-1 flex-col">
      <div className="flex h-[27px] items-end bg-[#373737]">
        <h2 className="flex h-[25px] items-center bg-[#444] px-[17px] text-[#eee]">UV Editor</h2>
      </div>
      <div className="flex min-h-0 flex-1 flex-col border border-[#8a8a8a] bg-[#444]">
        <nav className="flex h-[30px] items-start gap-[6px] pl-[6px] text-[#bbb]">
          {['Edit', 'Create', 'Select', 'Cut/Sew', 'Modify', 'Tools', 'View', 'Image', 'Textures', 'UV Sets', 'Help'].map(item => item === 'Modify' ? (
            <div key={item} className="relative h-[29px]">
              <button aria-expanded={open} onClick={() => setOpen(!open)} className="h-full bg-[#5285a6] px-[10px]">{item}</button>
              {open && <ModifyMenu />}
              <span className="pointer-events-none absolute -top-[14px] -right-[11px] -bottom-2 -left-3 z-30 border-5 border-[#ec1c24]" />
            </div>
          ) : <button key={item} className="h-[29px] px-[10px] whitespace-nowrap">{item}</button>)}
        </nav>
        <div className="flex h-[52px] items-center pl-[9px]">
          {uvLeft.map((item, i) => item === null
            ? <span key={i} className="mx-[6px] h-[34px] w-[3px] bg-[#4d4d4d]" />
            : (
              <IconCell key={i} label={`Display ${i + 1}`} active={item.active} className="size-[34px]">
                <Icon size={24}>{item.art}</Icon>
              </IconCell>
            ))}
          <div className="ml-auto flex items-center pr-[17px]">
            <IconCell label="Display image" active className="size-[34px]">
              <Icon size={26}><rect x="1" y="1" width="22" height="22" fill={G} stroke={D} />{fill('M3 21L10 9L14 15L16 13L21 21z', D)}<circle cx="15" cy="6" r="2" fill={D} /></Icon>
            </IconCell>
            <IconCell label="Checker" className="size-[34px]"><Icon size={24}><Checker x={0} y={0} s={3} n={8} /></Icon></IconCell>
            <Down className="mx-[10px]" />
            <input aria-label="Texture" placeholder="No texture found" className="h-8 w-[175px] bg-[#404040] px-2 placeholder:text-[#7c7c7c]" />
            <IconCell label="RGB channels" className="h-[34px] w-[38px]">
              <Icon size={30}><circle cx="12" cy="12" r="9" fill="none" stroke={G} strokeWidth="1.5" />{fill('M12 3A9 9 0 0 1 20 8H12zM12 21A9 9 0 0 1 4 16H12z')}<text x="12" y="16" textAnchor="middle" fontSize="11" fontWeight="bold" fontFamily="Liberation Sans" fill={G} stroke={D} strokeWidth="2" paintOrder="stroke">RGB</text></Icon>
            </IconCell>
            <IconCell label="Dim image" className="h-[34px] w-[34px]">
              <Icon size={24}><rect x="1" y="1" width="22" height="22" fill={G} />{line('M1 8L8 1M1 15L15 1M1 22L22 1M8 23L23 8M15 23L23 15', '#7fc4a2', 1)}{fill('M3 21L10 9L14 15L16 13L21 21z', D)}</Icon>
            </IconCell>
            <input type="range" aria-label="Dimmer" defaultValue="50" className="mr-[6px] ml-[2px] h-[22px] w-[84px] appearance-none bg-transparent [&::-webkit-slider-runnable-track]:h-2 [&::-webkit-slider-runnable-track]:bg-[#2b2b2b] [&::-webkit-slider-thumb]:-mt-[7px] [&::-webkit-slider-thumb]:h-[21px] [&::-webkit-slider-thumb]:w-[9px] [&::-webkit-slider-thumb]:appearance-none [&::-webkit-slider-thumb]:rounded-sm [&::-webkit-slider-thumb]:bg-[#c0c0c0]" />
            <Expander />
            <Expander className="ml-[10px]" />
          </div>
        </div>
        <UVCanvas />
      </div>
    </section>
  )
}

// ---------------------------------------------------------------- UV toolkit

const pinIcon = (cols, rows, inward) => (
  <>
    {inward ? line('M1 6H9M31 6H23', G, 2.5) : line('M5 6H27', G, 2.5)}
    {inward ? fill('M8 1L14 6L8 11zM24 1L18 6L24 11z', G) : fill('M7 1L1 6L7 11zM25 1L31 6L25 11z', G)}
    <Tiles x={5} y={14} s={6.5} cols={cols} rows={rows} color={inward ? L : G} />
    {inward && <Tiles x={12.5} y={14} s={6.5} cols={1} rows={rows} color={G} />}
  </>
)

function Section({ name, inset }) {
  return (
    <button className={clsx('flex h-7 items-center rounded-sm bg-[#3b3b3b] pl-[14px] text-left font-bold text-[#bbb]', inset && 'mx-2')}>
      <svg width="7" height="14" viewBox="0 0 7 14" className="mr-[20px] mb-1" aria-hidden="true"><path d="M0 0L7 7L0 14z" fill="#eee" /></svg>
      {name}
    </button>
  )
}

function Constraint({ id, label, wide, children }) {
  return (
    <div className="flex h-[39px] items-center pr-[16px] pl-[15px]">
      <label htmlFor={id} className={clsx('whitespace-nowrap', wide ? 'w-[108px]' : 'w-[191px]')}>{label}</label>
      <Down className="mb-[6px]" />
      <input id={id} defaultValue="Off" className="ml-[18px] h-[34px] min-w-0 flex-1 bg-[#404040] px-[9px]" />
      {children}
    </div>
  )
}

function Toolkit() {
  const [mode, setMode] = useState('Pick/Marquee')
  return (
    <section className="flex w-[437px] shrink-0 flex-col border-l-6 border-[#373737] bg-[#444] text-[#bbb]">
      <div className="flex h-[27px] items-end bg-[#373737] pl-[2px]">
        <h2 className="flex h-[25px] items-center bg-[#444] px-[17px] text-[#eee]">UV Toolkit</h2>
      </div>
      <MenuBar items={['Options', 'Help']} className="h-[32px] gap-[25px] pl-[17px]" />
      <div className="mt-[11px] flex h-[54px] items-center pl-[38px]">
        <IconCell label="Vertex selection" className="size-[54px]"><Icon size={40} box={40}>{line('M8 5H32M8 35H32M5 8V32M35 8V32')}{box(2, 2, 6, G)}{box(32, 2, 6, G)}{box(2, 32, 6, G)}{box(32, 32, 6, G)}</Icon></IconCell>
        <IconCell label="Edge selection" className="size-[54px]"><Icon size={42} box={42}>{line('M21 1L1 21L21 41L41 21')}{line('M21 1L41 21', G)}</Icon></IconCell>
        <IconCell label="Face selection" className="size-[54px]"><Icon size={44} box={44}>{fill('M22 1L41 11L22 21L3 11zM3 13L21 23V43L3 33z')}{fill('M23 23L42 13V33L23 43z', G)}</Icon></IconCell>
        <span className="mx-6 h-full w-[3px] bg-[#4d4d4d]" />
        <IconCell label="UV selection" className="size-[54px]"><Icon size={40} box={40}>{line('M8 5H32M8 35H32M5 8V32M35 8V32')}{box(2, 2, 6, G)}{box(32, 2, 6, G)}{box(2, 32, 6, G)}{box(32, 32, 6, G)}<Checker x={11} y={11} s={6} n={3} /></Icon></IconCell>
        <IconCell label="Shell selection" active className="size-[54px]"><Icon size={40} box={40}>{line('M2 2H38V38H2zM20 2V38M2 20H38', '#274a3f', 4)}{line('M2 2H38V38H2zM20 2V38M2 20H38', '#6cc39b', 1.2)}</Icon></IconCell>
      </div>
      <fieldset className="mt-[48px] flex flex-col pl-[17px]">
        {['Pick/Marquee', 'Drag', 'Tweak/Marquee'].map(item => (
          <label key={item} className="flex h-[26px] items-center gap-[11px]">
            <input type="radio" name="pick" checked={mode === item} onChange={() => setMode(item)} className="size-[14px] appearance-none rounded-full border border-[#2b2b2b] bg-[#2b2b2b] checked:bg-[#c8c8c8]" />
            {item}
          </label>
        ))}
      </fieldset>
      <div className="mt-[6px]">
        <Constraint id="uv-symmetry" label="Symmetry:" wide>
          <button aria-label="Symmetrize" className="mr-1 ml-[10px]">
            <Icon size={27}>{fill('M1 1H10V11H1zM14 1H23V11H14zM1 13H10V23L1 20zM14 13H23V20L14 23z', G)}{line('M12 0V24', L, 1, { strokeDasharray: '4 2' })}</Icon>
          </button>
        </Constraint>
        <Constraint id="uv-selection" label="Selection Constraint:" />
        <Constraint id="uv-transform" label="Transform Constraint:" />
      </div>
      <div className="mt-[9px] flex gap-5 pl-[61px]">
        {['All', 'Clear', 'Inverse'].map(item => <button key={item} className="h-[30px] w-[76px] bg-[#5d5d5d] text-[#eee]">{item}</button>)}
      </div>
      <div className="mt-3 flex h-[24px] pl-[101px]">
        <button aria-label="Shrink" className="mr-6"><Icon size={26} box={32}>{pinIcon(3, 1, true)}</Icon></button>
        <button aria-label="Shrink loop" className="mr-10"><Icon size={26} box={32}>{pinIcon(3, 2, true)}</Icon></button>
        <button aria-label="Grow loop" className="mr-6"><Icon size={26} box={32}>{pinIcon(3, 2, false)}</Icon></button>
        <button aria-label="Grow"><Icon size={26} box={32}>{pinIcon(3, 1, false)}</Icon></button>
      </div>
      <div className="mt-3 flex flex-col gap-[2px] pr-[6px] pl-[6px]">
        {['Pinning', 'Select By Type', 'Soft Selection'].map(name => <Section key={name} name={name} inset />)}
        <span className="h-[6px]" />
        {['Transform', 'Create', 'Cut and Sew', 'Unfold', 'Align and Snap', 'Arrange and Layout'].map(name => <Section key={name} name={name} />)}
      </div>
      <div className="mt-auto flex flex-col px-[5px] pb-[9px]">
        <Dots className="mb-[3px] h-[6px] w-[142px] self-center" />
        <Section name="UV Sets" />
      </div>
    </section>
  )
}

function UVWindow() {
  return (
    <div className="absolute top-[248px] right-[6px] bottom-[24px] left-[923px] flex flex-col bg-[#444] shadow-[0_0_10px_rgba(0,0,0,0.7)]">
      <header className="flex h-[44px] shrink-0 items-center bg-white pl-[11px]">
        <MayaLogo size={24} />
        <div className="ml-auto flex">
          {[['Minimize', 'M0 8H15'], ['Maximize', 'M1 1H15V15H1z'], ['Close', 'M1 1L15 15M15 1L1 15']].map(([name, d]) => (
            <button key={name} aria-label={name} className="flex h-[42px] w-[70px] items-center justify-center">
              <svg width="16" height="16" viewBox="0 0 16 16" aria-hidden="true"><path d={d} fill="none" stroke="#000" /></svg>
            </button>
          ))}
        </div>
      </header>
      <div className="flex min-h-0 flex-1 pb-[2px] pl-px">
        <UVEditor />
        <Toolkit />
      </div>
    </div>
  )
}

export default function App() {
  return (
    <div className="relative flex h-screen flex-col overflow-hidden bg-[#444] font-['Open_Sans','Noto_Sans',sans-serif] text-[15px] leading-5 text-[#bbb]">
      <header className="flex h-[25px] shrink-0 items-start gap-[6px] bg-white text-[#999]">
        <MayaLogo size={20} />
        <h1 className="text-[17px] leading-5">Autodesk Maya 2018: untitled*</h1>
      </header>
      <div className="flex h-[35px] shrink-0 items-center justify-between">
        <MenuBar items={mainMenu} className="gap-[26px] pb-[2px] pl-[10px] text-[#c4c4c4]" />
        <label className="mt-[5px] flex items-center gap-[10px] overflow-hidden whitespace-nowrap">
          Workspace :
          <select className="h-[26px] w-[79px] appearance-none rounded-l-sm bg-[#5d5d5d] pl-[5px]">
            <option>Maya Clas</option>
          </select>
        </label>
      </div>
      <StatusLine />
      <div className="h-[6px] shrink-0 border-t-4 border-[#373737]" />
      <Shelf />
      <main className="flex min-h-0 flex-1">
        <ToolBox />
        <Viewport />
        <aside className="flex w-[199px] shrink-0 flex-col border-l-4 border-[#373737] bg-[#2b2b2b]">
          <div className="flex h-[66px] items-end justify-end overflow-hidden bg-[#444] pb-2"><span className="-mr-1">e</span></div>
        </aside>
      </main>
      <UVWindow />
    </div>
  )
}
